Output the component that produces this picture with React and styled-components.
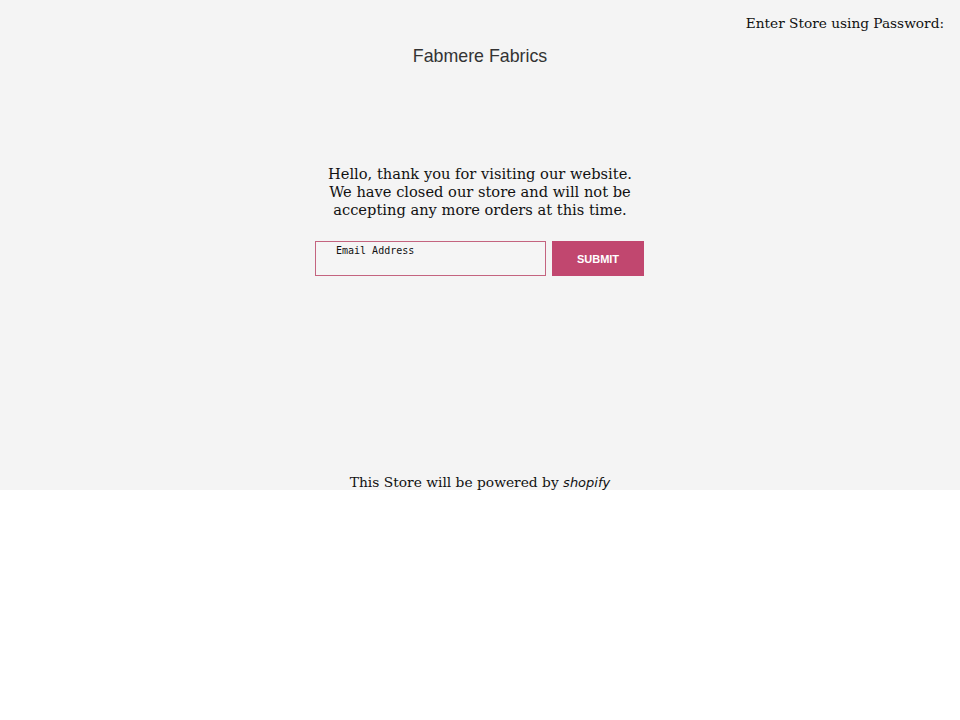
import React from 'react';
import styled, { createGlobalStyle } from 'styled-components';

const GlobalStyle = createGlobalStyle`
  html, body {
    margin: 0;
    padding: 0;
    background: #ffffff;
  }
`;

const Page = styled.div`
  background: #f4f4f4;
  height: 490px;
  display: flex;
  flex-direction: column;
  font-family: "DejaVu Serif", serif;
  color: #111;
`;

const TopBar = styled.div`
  display: flex;
  justify-content: flex-end;
  padding: 14px 16px 0 0;
  font-size: 13.7px;
  line-height: 18px;
`;

const PasswordLink = styled.a`
  color: #111;
  text-decoration: none;
  cursor: pointer;
`;

const StoreName = styled.h1`
  margin: 13px 0 0;
  text-align: center;
  font-family: "Liberation Sans", Arial, sans-serif;
  font-weight: normal;
  font-size: 17.8px;
  line-height: 22px;
  color: #333;
`;

const Main = styled.div`
  display: flex;
  flex-direction: column;
  align-items: center;
  margin-top: 98px;
`;

const Message = styled.p`
  margin: 0;
  text-align: center;
  font-size: 14.65px;
  line-height: 18px;
`;

const Form = styled.form`
  display: flex;
  gap: 6px;
  margin: 22px 1px 0 0;
`;

const EmailInput = styled.input`
  box-sizing: border-box;
  width: 231px;
  height: 35px;
  border: 1px solid #c4647f;
  border-radius: 0;
  background: #f5f5f5;
  padding: 0 20px 16px;
  font-family: "DejaVu Sans Mono", monospace;
  font-size: 10px;
  color: #111;
  outline: none;

  &::placeholder {
    color: #111;
  }
`;

const SubmitButton = styled.button`
  width: 92px;
  height: 35px;
  border: none;
  background: #c1476f;
  color: #fff;
  font-family: "Liberation Sans", Arial, sans-serif;
  font-weight: bold;
  font-size: 11px;
  cursor: pointer;
`;

const Footer = styled.div`
  margin-top: auto;
  margin-bottom: -2px;
  text-align: center;
  font-size: 13.8px;
  line-height: 18px;
`;

const Brand = styled.span`
  font-family: "DejaVu Sans", sans-serif;
  font-style: italic;
  font-size: 13px;
`;

export default function App() {
  return (
    <>
      <GlobalStyle />
      <Page>
        <TopBar>
          <PasswordLink>Enter Store using Password:</PasswordLink>
        </TopBar>
        <StoreName>Fabmere Fabrics</StoreName>
        <Main>
          <Message>
            Hello, thank you for visiting our website.
            <br />
            We have closed our store and will not be
            <br />
            accepting any more orders at this time.
          </Message>
          <Form onSubmit={e => e.preventDefault()}>
            <EmailInput type="email" placeholder="Email Address" />
            <SubmitButton type="submit">SUBMIT</SubmitButton>
          </Form>
        </Main>
        <Footer>
          This Store will be powered by <Brand>shopify</Brand>
        </Footer>
      </Page>
    </>
  );
}
